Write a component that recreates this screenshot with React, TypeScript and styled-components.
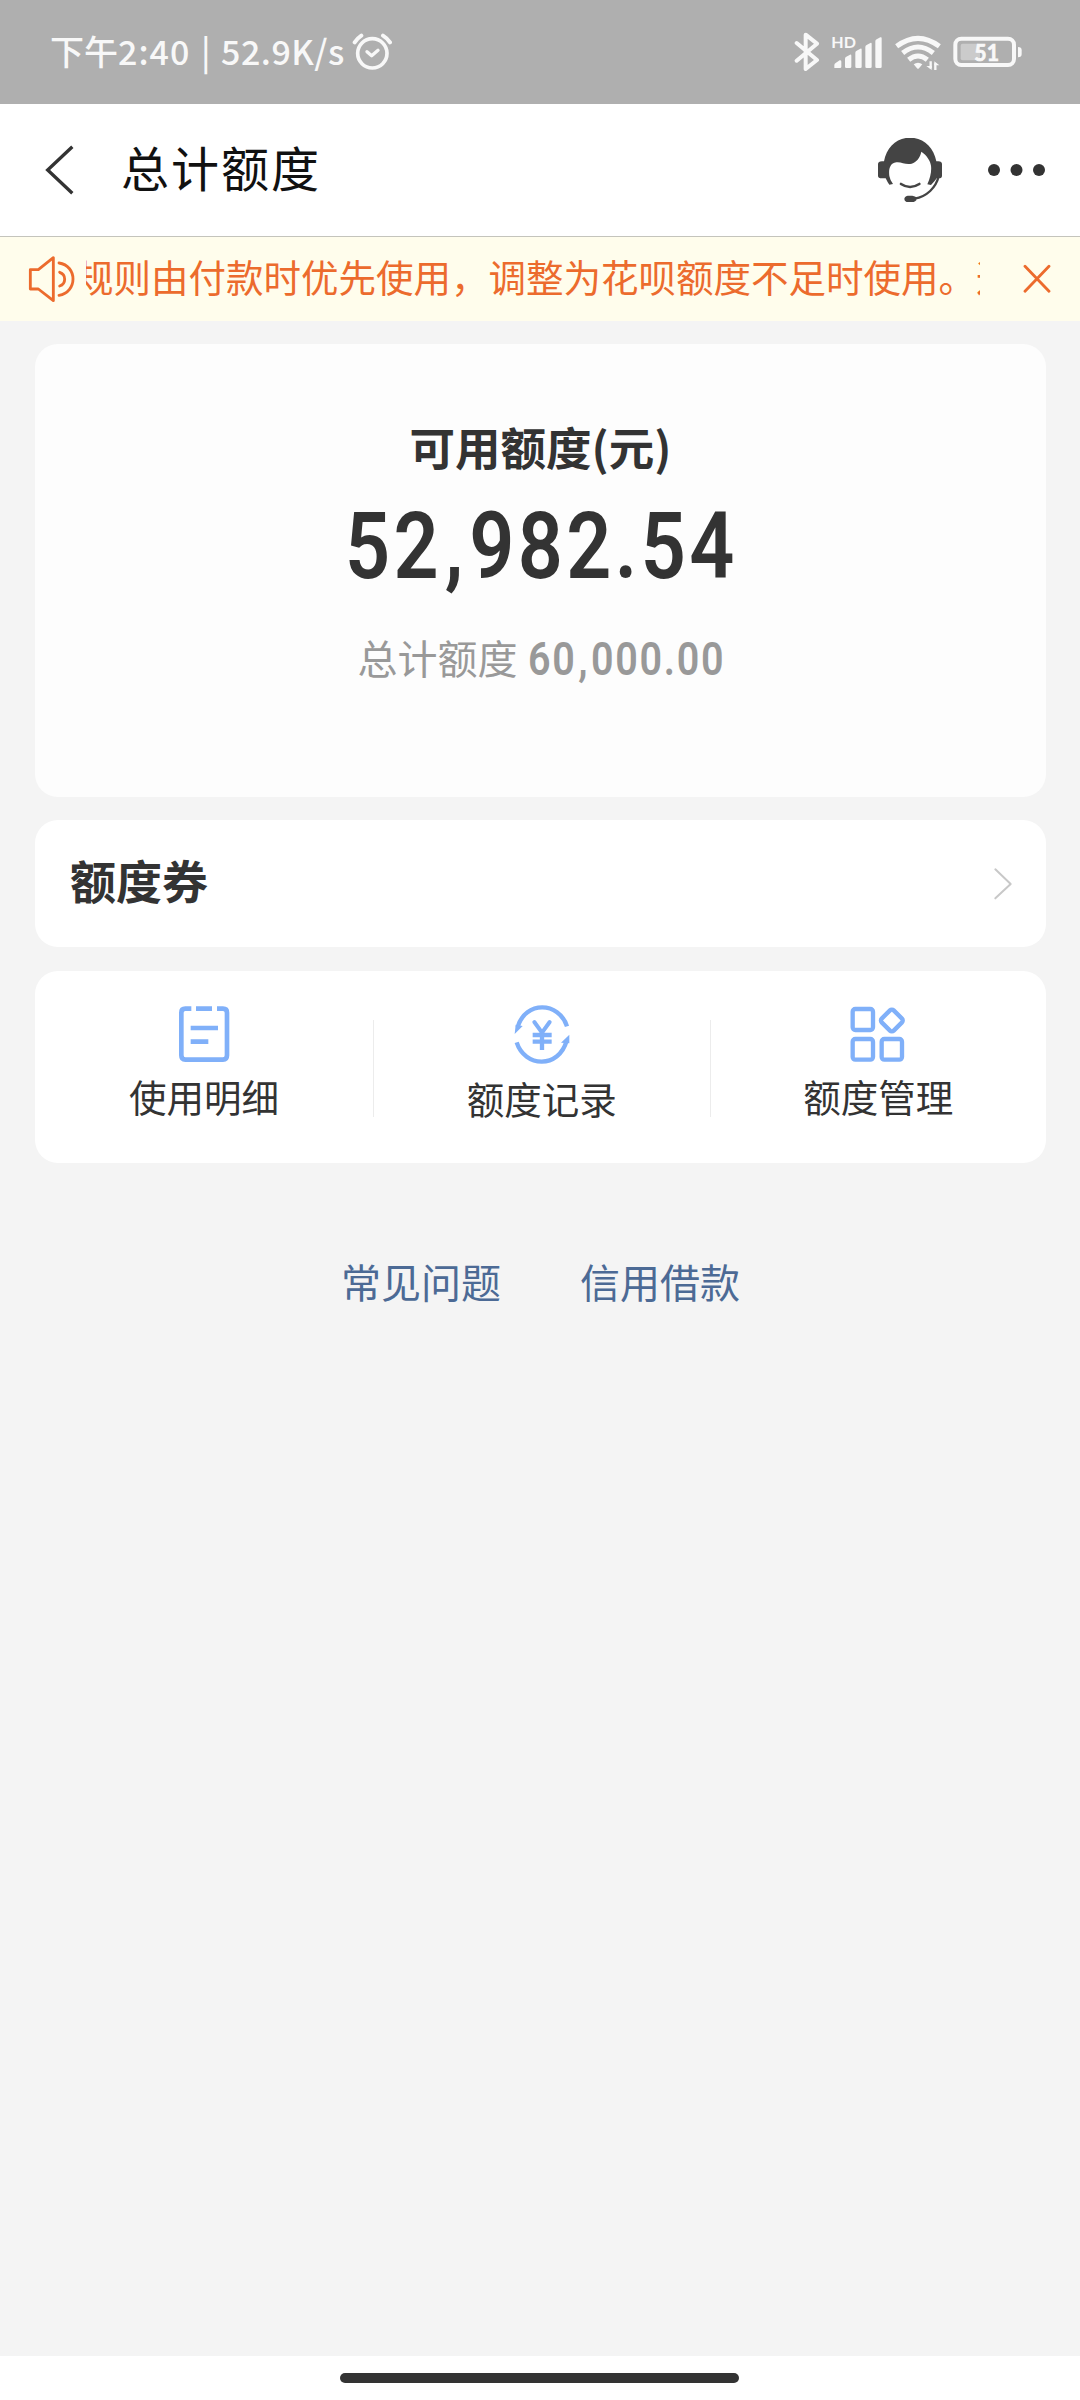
import React from "react";
import styled, { createGlobalStyle } from "styled-components";

const GlobalStyle = createGlobalStyle`
  html, body { margin: 0; padding: 0; background: #f4f4f4; }
  *, *::before, *::after { box-sizing: border-box; }
  body { font-family: "Noto Sans CJK SC", "Noto Sans", sans-serif; }
  button { border: 0; padding: 0; background: none; font: inherit; color: inherit; }
  svg { display: block; flex: none; }
`;

const Screen = styled.div`
  width: 1080px;
  height: 2400px;
  display: flex;
  flex-direction: column;
  background: #f4f4f4;
  overflow: hidden;
`;

const StatusBar = styled.div`
  height: 104px;
  flex: none;
  display: flex;
  align-items: flex-start;
  justify-content: space-between;
  padding: 32px 57px 0 50px;
  background: #afafaf;
  color: #f8f8f8;
`;

const StatusGroup = styled.div<{ $gap?: number }>`
  display: flex;
  align-items: flex-start;
  gap: ${(p) => p.$gap ?? 0}px;
`;

const Clock = styled.span`
  width: 302px;
  height: 40px;
  display: flex;
  white-space: pre;
  font-size: 34px;
  line-height: 38px;
  font-weight: 500;
`;

const ClockPart = styled.span<{ $width: number; $spacing?: number }>`
  width: ${(p) => p.$width}px;
  letter-spacing: ${(p) => p.$spacing ?? 0}px;
`;

const Header = styled.header`
  height: 133px;
  flex: none;
  display: flex;
  align-items: center;
  padding: 0 34px 0 44px;
  background: #fff;
  border-bottom: 1px solid #c4c4bc;
`;

const Title = styled.h1`
  flex: 1;
  margin: -9px 0 0 45px;
  font-size: 48px;
  line-height: 60px;
  font-weight: 400;
  letter-spacing: 2px;
  color: #111;
`;

const HeaderActions = styled.div`
  display: flex;
  align-items: center;
  gap: 44px;
`;

const Notice = styled.div`
  height: 84px;
  flex: none;
  display: flex;
  align-items: center;
  padding: 0 29px 0 26px;
  background: #fffdec;
  color: #ec6b2d;
`;

const Marquee = styled.div`
  width: 894px;
  margin-left: 10px;
  margin-right: 43px;
  height: 60px;
  overflow: hidden;
`;

const MarqueeText = styled.div`
  margin-left: -10px;
  margin-top: -2px;
  font-size: 37.5px;
  line-height: 58px;
  white-space: nowrap;
`;

const Content = styled.main`
  flex: 1;
  display: flex;
  flex-direction: column;
  gap: 23px;
  padding: 23px 34px 0 35px;
`;

const Card = styled.section`
  border-radius: 23px;
  background: #fff;
`;

const BalanceCard = styled(Card)`
  height: 453px;
  display: flex;
  flex-direction: column;
  align-items: center;
  padding-top: 69px;
  background: #fdfdfd;
`;

const BalanceLabel = styled.div`
  margin-bottom: 14px;
  font-size: 45.5px;
  line-height: 66px;
  font-weight: 700;
  color: #333;
`;

const Figure = styled.div<{ $width: number; $size: number; $height: number; $spacing: number; $color: string }>`
  width: ${(p) => p.$width}px;
  height: ${(p) => p.$height}px;
  font-family: Roboto, sans-serif;
  font-size: ${(p) => p.$size}px;
  line-height: ${(p) => p.$height}px;
  font-weight: 600;
  letter-spacing: ${(p) => p.$spacing}px;
  white-space: nowrap;
  color: ${(p) => p.$color};
`;

const Condensed = styled.span`
  display: inline-block;
  transform: scaleX(0.85);
  transform-origin: left center;
`;

const Comma = styled.span<{ $gap: number }>`
  margin: 0 ${(p) => p.$gap}px;
`;

const TotalRow = styled.div`
  display: flex;
  align-items: center;
  margin-top: 28px;
  height: 60px;
  color: #999;
`;

const TotalLabel = styled.span`
  font-size: 40px;
  line-height: 60px;
  margin-right: 10px;
  margin-top: -5px;
`;

const CouponCard = styled(Card)`
  height: 127px;
  display: flex;
  align-items: center;
  justify-content: space-between;
  padding: 0 33px 0 35px;
`;

const CouponTitle = styled.span`
  margin-top: -10px;
  font-size: 46px;
  line-height: 66px;
  font-weight: 700;
  color: #333;
`;

const ActionsCard = styled(Card)`
  height: 192px;
  display: grid;
  grid-template-columns: 338px 1px 335.5px 1px 335.5px;
  align-items: start;
  margin-top: 1px;
`;

const Action = styled.button<{ $drop?: number }>`
  display: flex;
  flex-direction: column;
  align-items: center;
  padding-top: 33px;
  color: #333;

  & > span {
    margin-top: ${(p) => 5 + (p.$drop ?? 0)}px;
    font-size: 37.5px;
    line-height: 54px;
  }
`;

const Divider = styled.i`
  height: 97px;
  margin-top: 49px;
  background: #ececec;
`;

const Links = styled.nav`
  display: flex;
  justify-content: center;
  gap: 79px;
  margin-top: 66px;
`;

const TextLink = styled.a`
  font-size: 40px;
  line-height: 58px;
  color: #4c6a95;
`;

const GestureBar = styled.div`
  height: 44px;
  flex: none;
  display: flex;
  justify-content: center;
  padding-top: 17px;
  background: #fff;

  &::after {
    content: "";
    width: 399px;
    height: 10px;
    margin-right: 1px;
    border-radius: 5px;
    background: #333;
  }
`;

const AlarmIcon = () => (
  <svg width="40" height="40" viewBox="1057 96 120 120" fill="none" stroke="#f8f8f8" strokeLinecap="round" strokeLinejoin="round">
    <circle cx="1118" cy="160" r="44" strokeWidth="11" />
    <path d="M1102 155l14 12 19-16" strokeWidth="10" />
    <path d="M1065 127q8-12 20-20M1150 107q13 8 21 20" strokeWidth="12" />
  </svg>
);

const BluetoothIcon = () => (
  <svg width="26" height="40" viewBox="99 96 78 120" fill="none" stroke="#f8f8f8" strokeWidth="12" strokeLinejoin="round" strokeLinecap="round">
    <path d="M107 129l61 51-34 27V104l34 27-61 51" />
  </svg>
);

const SignalIcon = () => (
  <svg width="52" height="40" viewBox="207 96 156 120" fill="#f8f8f8">
    <text x="208" y="143" fontFamily="Lato, sans-serif" fontSize="47" fontWeight="700" textLength="74" lengthAdjust="spacingAndGlyphs">HD</text>
    <path d="M217 204v-9q0-5 5-7l11-7q5-2 5 4v15q0 4-4 4z" />
    <path d="M249 200v-24q0-4 4-6l11-6q4-2 4 3v33q0 4-4 4h-11q-4 0-4-4z" />
    <path d="M280 200v-42q0-4 4-6l11-6q4-2 4 3v51q0 4-4 4h-11q-4 0-4-4z" />
    <path d="M310 200v-59q0-4 4-6l11-6q4-2 4 3v68q0 4-4 4h-11q-4 0-4-4z" />
    <path d="M340 200v-76q0-4 4-6l11-6q4-2 4 3v85q0 4-4 4h-11q-4 0-4-4z" />
  </svg>
);

const WifiIcon = () => (
  <svg width="48" height="40" viewBox="396 96 144 120" fill="none" stroke="#f8f8f8" strokeWidth="15">
    <path d="M404 139q64-48 128 0M422 159q46-36 92 0M440 179q28-22 56 0" />
    <path d="M455 193q13-10 26 0l-10 12q-3 3-6 0z" fill="#f8f8f8" stroke="none" />
    <path d="M506 184v21M520 190v20" strokeWidth="7" />
    <path d="M509 210l-16-12h16zM517 184l15 12h-15z" fill="#f8f8f8" stroke="none" />
  </svg>
);

const BatteryIcon = () => (
  <svg width="70" height="40" viewBox="580 96 210 120">
    <rect x="587" y="116" width="176" height="79" rx="18" fill="none" stroke="#f8f8f8" strokeWidth="12" />
    <rect x="603" y="131" width="58" height="50" rx="6" fill="#cbcbcb" />
    <path d="M775 141q11 0 11 10v11q0 10-11 10z" fill="#f8f8f8" />
    <text x="644" y="183" fill="#f8f8f8" stroke="#f8f8f8" strokeWidth="2" fontFamily="Lato, sans-serif" fontSize="66" fontWeight="700" textLength="74" lengthAdjust="spacingAndGlyphs">51</text>
  </svg>
);

const BackIcon = () => (
  <svg width="32" height="50" viewBox="134 432 96 150" fill="none" stroke="#333" strokeWidth="10">
    <path d="M219 437l-74 70 74 70" />
  </svg>
);

const ServiceIcon = () => (
  <svg width="64" height="64" viewBox="114 99 192 192" fill="#444">
    <path d="M114 177q0-7 12-8h6C140 126 171 98 210 98s71 28 79 71h6q11 1 11 8v35q0 8-10 8h-6q-5 8-17 20l-11-2c9-20 13-38 11-56-2-14-12-31-29-42-4 18-14 31-29 36-18 5-30-6-46-4-22 3-23 25-21 41q2 12 11 24l-11 2q-6-8-11-19h-11q-12 0-12-8z" />
    <path d="M183 237q27 18 55 0" fill="none" stroke="#444" strokeWidth="8" strokeLinecap="round" />
    <path d="M296 214c-8 34-36 61-72 67" fill="none" stroke="#444" strokeWidth="7" />
    <path d="M203 272h14q9 2 12 5v9q-5 5-12 6h-14q-10-2-10-10t10-10z" />
  </svg>
);

const MoreIcon = () => (
  <svg width="60" height="16" viewBox="0 0 60 16" fill="#333">
    <circle cx="8" cy="8" r="6" />
    <circle cx="30.5" cy="8" r="6" />
    <circle cx="53" cy="8" r="6" />
  </svg>
);

const SpeakerIcon = () => (
  <svg width="50" height="48" viewBox="78 50 150 144" fill="none" stroke="#ec6b2d" strokeWidth="8.5" strokeLinecap="round" strokeLinejoin="round">
    <path d="M91 94h24l45-36v129l-45-35H91z" />
    <path d="M177 74c56 8 56 88 0 97M179 102c20 7 20 34 0 41" />
  </svg>
);

const CloseIcon = () => (
  <svg width="28" height="30" viewBox="550 477 84 90" fill="none" stroke="#ec6b2d" strokeWidth="8.5" strokeLinecap="round">
    <path d="M556 484l72 75M628 484l-72 75" />
  </svg>
);

const ChevronIcon = () => (
  <svg width="20" height="34" viewBox="820 203 60 102" fill="none" stroke="#c8c8c8" strokeWidth="6" strokeLinecap="round" strokeLinejoin="round">
    <path d="M827 210l46 44-46 43" />
  </svg>
);

const DetailsIcon = () => (
  <svg width="60" height="60" viewBox="519 672 180 180" fill="none" stroke="#80b0f9" strokeWidth="14">
    <path d="M571 686h-18q-12 0-12 12v128q0 13 12 13h113q12 0 12-13V698q0-12-12-12h-18M585 686h48M569 744h82M569 785h53" />
  </svg>
);

const RecordsIcon = () => (
  <svg width="60" height="60" viewBox="333 132 180 180" fill="none" stroke="#80b0f9" strokeWidth="13">
    <path d="M498 199C474 124 373 122 350 201M347 247C371 322 473 328 497 242" />
    <path d="M344 194l-3 28 24-24zM505 224v26l-25-2z" fill="#80b0f9" stroke="none" />
    <path d="M400 186l23 32 23-32" strokeLinecap="round" strokeWidth="12" />
    <path d="M395 225h57M395 245h57M423 216v54" strokeWidth="13" />
  </svg>
);

const ManageIcon = () => (
  <svg width="60" height="60" viewBox="385 612 180 180" fill="none" stroke="#80b0f9" strokeWidth="13">
    <rect x="399" y="627" width="61" height="63" rx="8" />
    <rect x="399" y="717" width="61" height="62" rx="8" />
    <rect x="486" y="717" width="61" height="62" rx="8" />
    <rect x="491" y="636" width="51" height="51" rx="8" transform="rotate(45 516.5 661.5)" />
  </svg>
);

export default function App() {
  return (
    <>
      <GlobalStyle />
      <Screen>
        <StatusBar>
          <StatusGroup>
            <Clock>
              <ClockPart $width={68}>下午</ClockPart>
              <ClockPart $width={83} $spacing={1}>2:40</ClockPart>
              <ClockPart $width={20}>|</ClockPart>
              <ClockPart $width={131} $spacing={0.5}>52.9K/s</ClockPart>
            </Clock>
            <AlarmIcon />
          </StatusGroup>
          <StatusGroup $gap={11}>
            <BluetoothIcon />
            <SignalIcon />
            <WifiIcon />
            <BatteryIcon />
          </StatusGroup>
        </StatusBar>

        <Header>
          <BackIcon />
          <Title>总计额度</Title>
          <HeaderActions>
            <ServiceIcon />
            <MoreIcon />
          </HeaderActions>
        </Header>

        <Notice>
          <SpeakerIcon />
          <Marquee>
            <MarqueeText>规则由付款时优先使用，调整为花呗额度不足时使用。这</MarqueeText>
          </Marquee>
          <CloseIcon />
        </Notice>

        <Content>
          <BalanceCard>
            <BalanceLabel>可用额度(元)</BalanceLabel>
            <Figure $width={391} $height={108} $size={93} $spacing={4} $color="#333">
              <Condensed>52<Comma $gap={3}>,</Comma>982.54</Condensed>
            </Figure>
            <TotalRow>
              <TotalLabel>总计额度</TotalLabel>
              <Figure $width={196} $height={60} $size={46.5} $spacing={2} $color="#999">
                <Condensed>60<Comma $gap={2}>,</Comma>000.00</Condensed>
              </Figure>
            </TotalRow>
          </BalanceCard>

          <CouponCard>
            <CouponTitle>额度券</CouponTitle>
            <ChevronIcon />
          </CouponCard>

          <ActionsCard>
            <Action>
              <DetailsIcon />
              <span>使用明细</span>
            </Action>
            <Divider />
            <Action $drop={2}>
              <RecordsIcon />
              <span>额度记录</span>
            </Action>
            <Divider />
            <Action>
              <ManageIcon />
              <span>额度管理</span>
            </Action>
          </ActionsCard>

          <Links>
            <TextLink>常见问题</TextLink>
            <TextLink>信用借款</TextLink>
          </Links>
        </Content>

        <GestureBar />
      </Screen>
    </>
  );
}
